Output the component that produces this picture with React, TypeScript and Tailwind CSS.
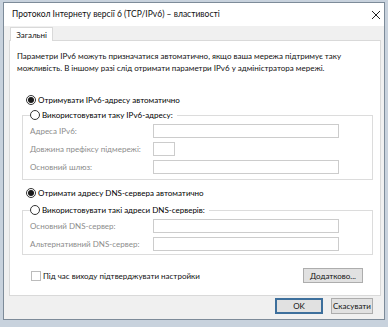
import React from 'react';

const Radio: React.FC<{ checked?: boolean }> = ({ checked }) => (
  <span className="w-[10px] h-[10px] rounded-full border border-[#333] bg-white flex items-center justify-center shrink-0">
    {checked && <span className="w-[6px] h-[6px] rounded-full bg-[#1a1a1a]" />}
  </span>
);

const Field: React.FC<{ label: string; w?: string }> = ({ label, w = 'w-[186px]' }) => (
  <div className="flex items-center h-[14px]">
    <span className="w-[123px] text-[#8c8c8c]">{label}</span>
    <span className={`${w} h-[14px] border border-[#cccccc] bg-white`} />
  </div>
);

const Group: React.FC<{ legend: string; children: React.ReactNode; className?: string }> = ({ legend, children, className }) => (
  <fieldset className={`ml-[12px] mr-[7px] border border-[#dcdcdc] pl-[7px] ${className ?? ''}`}>
    <legend className="ml-0 pr-[4px] flex items-center gap-[2px] h-[12px] text-black">
      <Radio />
      <span>{legend}</span>
    </legend>
    {children}
  </fieldset>
);

export default function App() {
  return (
    <div className="w-[388px] h-[327px] bg-[#c8d2dd] pl-[3px] pt-[2px] overflow-hidden text-[8px] font-['Lato',sans-serif]">
      <div className="w-[382px] h-[318px] border border-[#7d8b99] bg-[#f0f0f0] flex flex-col">
        {/* title bar */}
        <div className="h-[23px] bg-white flex items-center justify-between pl-[8px] pr-[3px] shrink-0">
          <span className="text-[8.5px] text-[#111]">Протокол Інтернету версії 6 (TCP/IPv6) – властивості</span>
          <svg width="10" height="10" viewBox="0 0 10 10">
            <path d="M1 1 L9 9 M9 1 L1 9" stroke="#222" strokeWidth="1" />
          </svg>
        </div>
        {/* tab row */}
        <div className="h-[14px] shrink-0 relative">
          <div className="absolute left-[6px] top-[1px] w-[43px] h-[14px] bg-white border border-b-0 border-[#d9d9d9] z-10 flex items-center justify-center text-[#111]">
            Загальні
          </div>
        </div>
        {/* panel */}
        <div className="ml-[5px] w-[372px] h-[256px] bg-white border border-[#d9d9d9] shrink-0 flex flex-col text-[#111]">
          <p className="pl-[7px] pt-[9px] leading-[12px] w-[345px]">
            Параметри IPv6 можуть призначатися автоматично, якщо ваша мережа підтримує таку можливість. В іншому разі слід отримати параметри IPv6 у адміністратора мережі.
          </p>
          <div className="ml-[16px] mt-[20px] flex items-center gap-[2px] h-[12px] text-black">
            <Radio checked />
            <span>Отримувати IPv6-адресу автоматично</span>
          </div>
          <Group legend="Використовувати таку IPv6-адресу:" className="mt-[3px] pb-[5px]">
            <div className="flex flex-col gap-[4px] mt-[3px]">
              <Field label="Адреса IPv6:" />
              <Field label="Довжина префіксу підмережі:" w="w-[22px]" />
              <Field label="Основний шлюз:" />
            </div>
          </Group>
          <div className="ml-[16px] mt-[7px] flex items-center gap-[2px] h-[12px] text-black">
            <Radio checked />
            <span>Отримати адресу DNS-сервера автоматично</span>
          </div>
          <Group legend="Використовувати такі адреси DNS-серверів:" className="mt-[5px] pb-[3px]">
            <div className="flex flex-col gap-[4px] mt-[3px]">
              <Field label="Основний DNS-сервер:" />
              <Field label="Альтернативний DNS-сервер:" />
            </div>
          </Group>
          <div className="mt-[13px] ml-[21px] mr-[17px] flex items-center justify-between">
            <div className="flex items-center gap-[2px]">
              <span className="w-[10px] h-[10px] border border-[#bcbcbc] bg-white" />
              <span>Під час виходу підтверджувати настройки</span>
            </div>
            <button className="w-[60px] h-[15px] bg-[#e1e1e1] border border-[#adadad] text-[#111]">Додатково...</button>
          </div>
        </div>
        {/* bottom buttons */}
        <div className="flex justify-end gap-[8px] pr-[11px] pt-[2px]">
          <button className="w-[48px] h-[16px] bg-[#e1e1e1] border-2 border-[#3d6f9c] text-[#111]">OK</button>
          <button className="w-[42px] h-[16px] bg-[#e1e1e1] border border-[#adadad] text-[#111]">Скасувати</button>
        </div>
      </div>
    </div>
  );
}
